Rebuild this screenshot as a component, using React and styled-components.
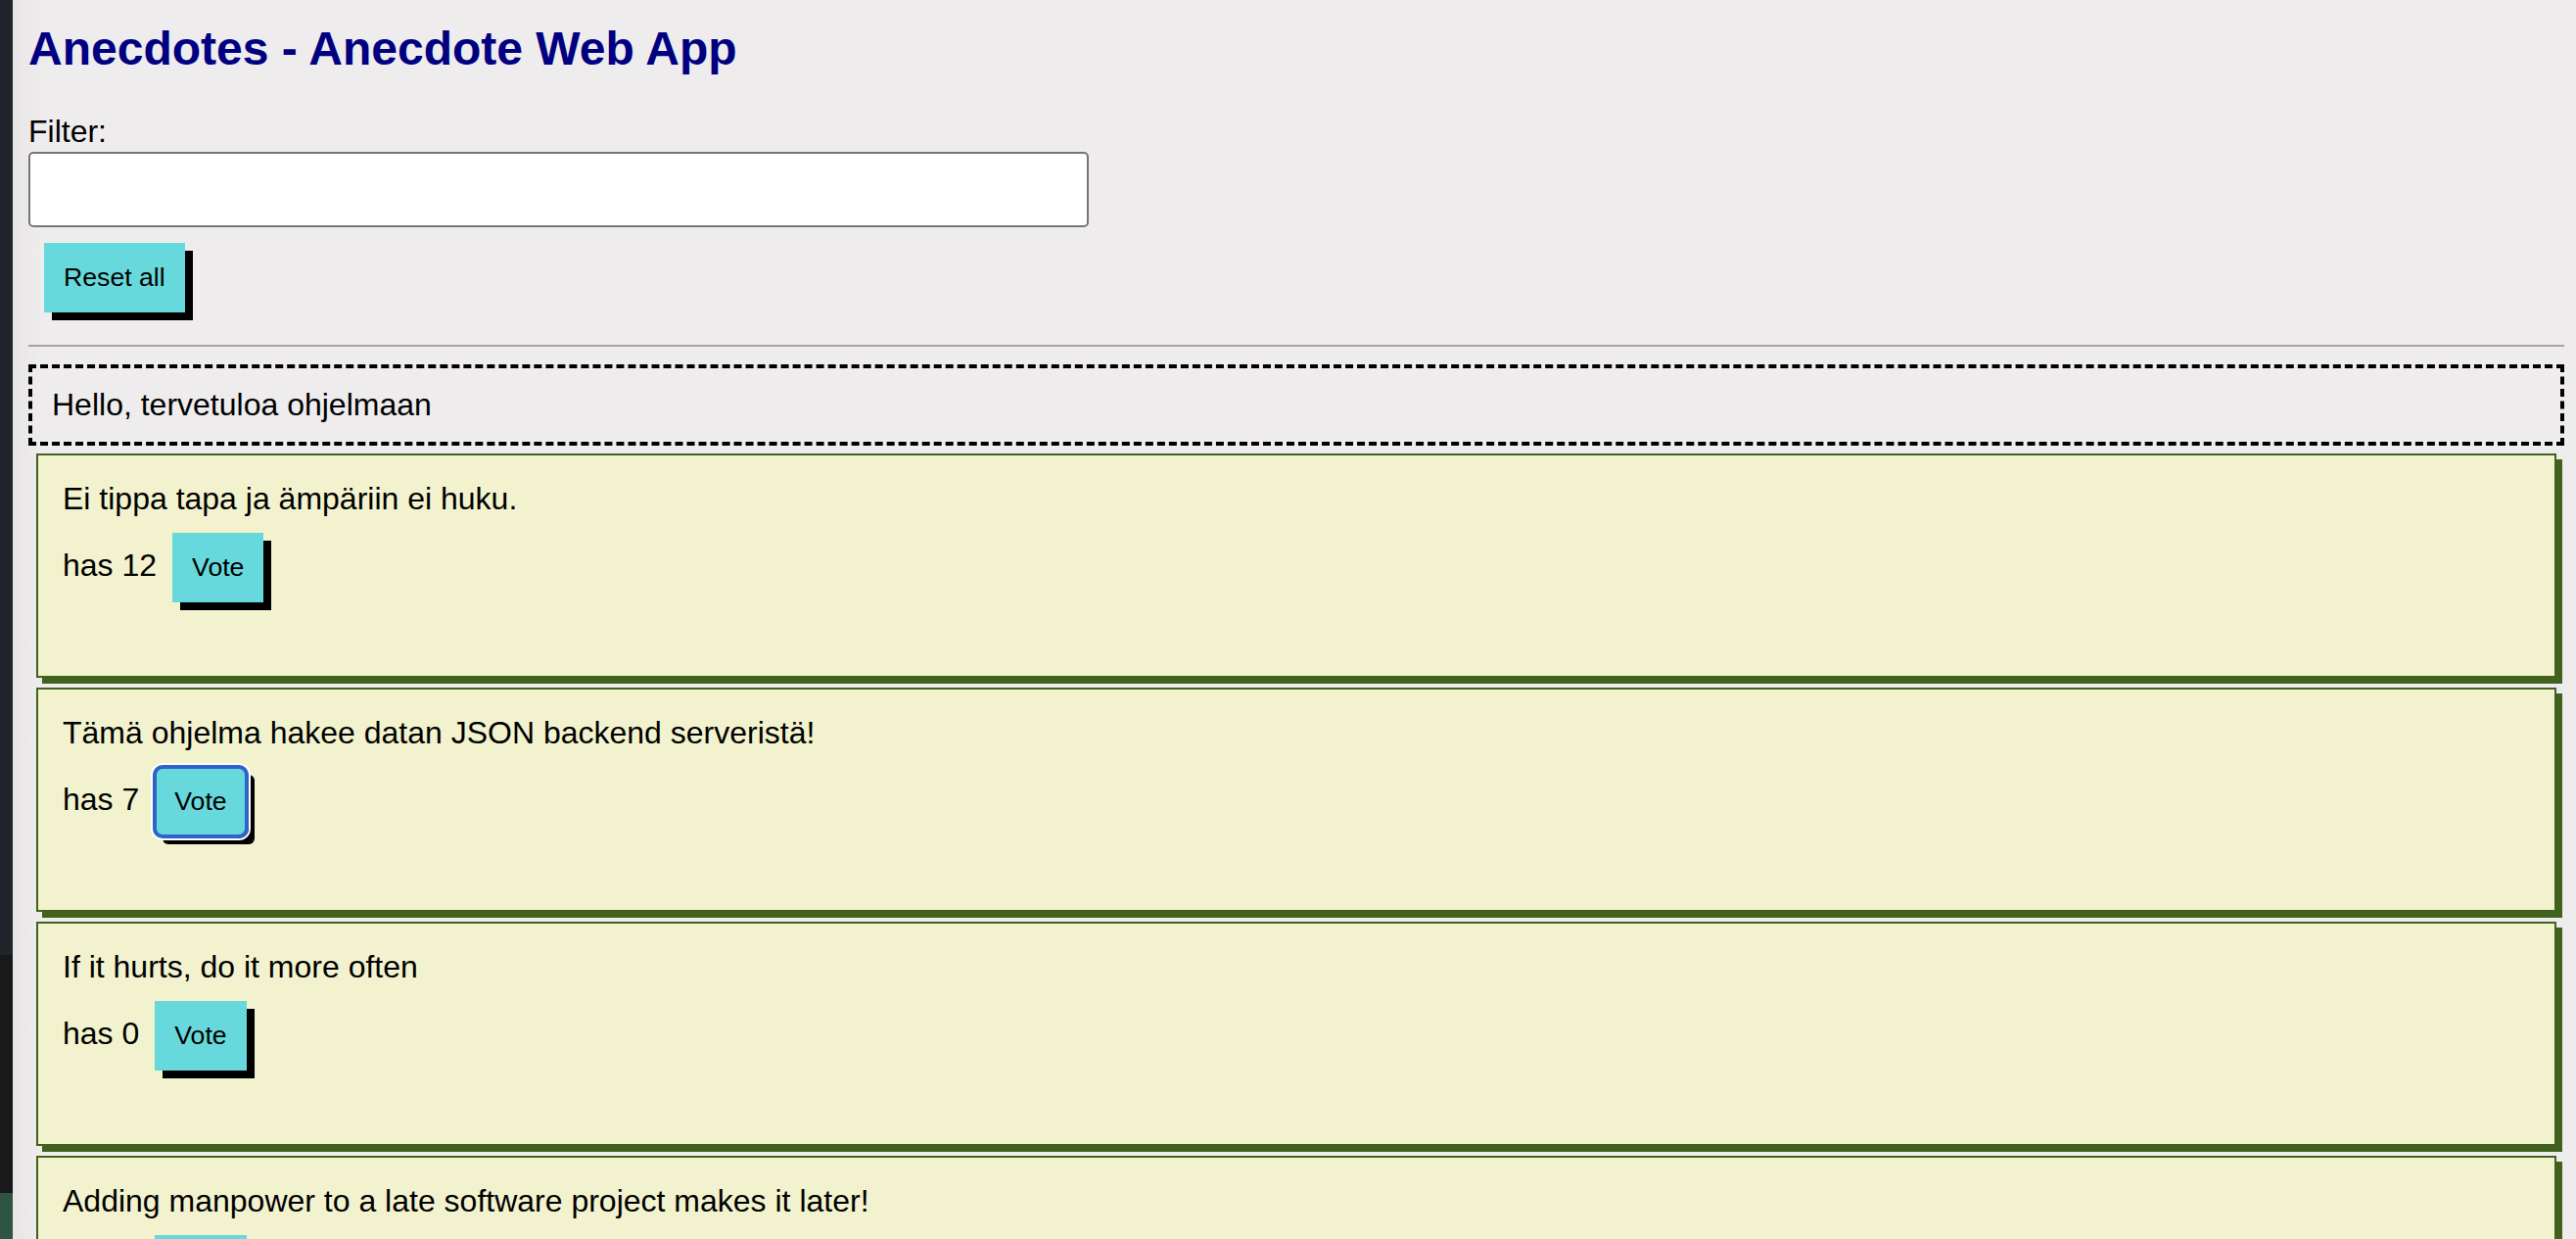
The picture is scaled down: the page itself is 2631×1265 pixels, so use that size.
import React from 'react'
import styled, { createGlobalStyle } from 'styled-components'

const GlobalStyle = createGlobalStyle`
    body {
        margin: 0;
        background: #eeeced;
        font-family: "Liberation Sans", Arial, sans-serif;
        color: #000;
    }
`

const Screen = styled.div`
    display: flex;
    min-height: 1265px;
`

const Strip = styled.div`
    width: 13px;
    flex-shrink: 0;
    background: linear-gradient(to bottom, #21252b 0, #21252b 975px, #19191b 975px, #19191b 1218px, #2e5443 1218px);
`

const Page = styled.div`
    flex: 1;
    min-width: 0;
    padding: 0 12px 0 16px;
    background: linear-gradient(to right, #e7e5e6 0, #eeeced 28px);
`

const Title = styled.h1`
    margin: 22px 0 39px;
    font-size: 48px;
    font-weight: bold;
    color: #000080;
    line-height: normal;
`

const Label = styled.div`
    font-size: 32px;
    margin-bottom: 2px;
`

const FilterInput = styled.input`
    display: block;
    box-sizing: border-box;
    width: 1083px;
    height: 77px;
    border: 2px solid #767676;
    border-radius: 5px;
    background: #fff;
    font-size: 32px;
    font-family: inherit;
    padding: 0 8px;
    outline: none;
`

const Actions = styled.div`
    font-size: 32px;
`

const Button = styled.button`
    position: relative;
    display: inline-block;
    margin: 16px;
    padding: 20px;
    border: none;
    border-radius: ${(props) => (props.focused ? '6px' : '0')};
    background: #67d9dc;
    color: #000;
    font-family: "Liberation Sans", Arial, sans-serif;
    font-size: 26.67px;
    line-height: normal;
    box-shadow: 8px 8px 0 #000;
    cursor: pointer;

    &::after {
        content: '';
        display: ${(props) => (props.focused ? 'block' : 'none')};
        position: absolute;
        inset: -2px;
        border: 4px solid #2f63c9;
        border-radius: 10px;
        box-shadow: 0 0 0 2px #fff;
    }
`

const Divider = styled.hr`
    margin: 17px 0 18px;
    border: none;
    border-top: 2px solid #a3a3a3;
`

const Notice = styled.div`
    border: 4px dashed #000;
    padding: 19px 20px;
    font-size: 32px;
`

const Card = styled.div`
    margin: 8px 8px 10px;
    padding: 26px 25px 59px;
    border: 2px solid #41621f;
    background: #f2f3ce;
    box-shadow: 6px 6px 0 #41621f;
    font-size: 32px;
`

const Content = styled.div``

const VoteRow = styled.div``

const anecdotes = [
    { id: 1, content: 'Ei tippa tapa ja ämpäriin ei huku.', votes: 12 },
    { id: 2, content: 'Tämä ohjelma hakee datan JSON backend serveristä!', votes: 7, focused: true },
    { id: 3, content: 'If it hurts, do it more often', votes: 0 },
    { id: 4, content: 'Adding manpower to a late software project makes it later!', votes: 0 },
]

const App = () => {
    return (
        <Screen>
            <GlobalStyle />
            <Strip />
            <Page>
                <Title>Anecdotes - Anecdote Web App</Title>
                <Label>Filter:</Label>
                <FilterInput />
                <Actions>
                    <Button>Reset all</Button>
                </Actions>
                <Divider />
                <Notice>Hello, tervetuloa ohjelmaan</Notice>
                {anecdotes.map((a) => (
                    <Card key={a.id}>
                        <Content>{a.content}</Content>
                        <VoteRow>
                            has {a.votes}
                            <Button focused={a.focused}>Vote</Button>
                        </VoteRow>
                    </Card>
                ))}
            </Page>
        </Screen>
    )
}

export default App
